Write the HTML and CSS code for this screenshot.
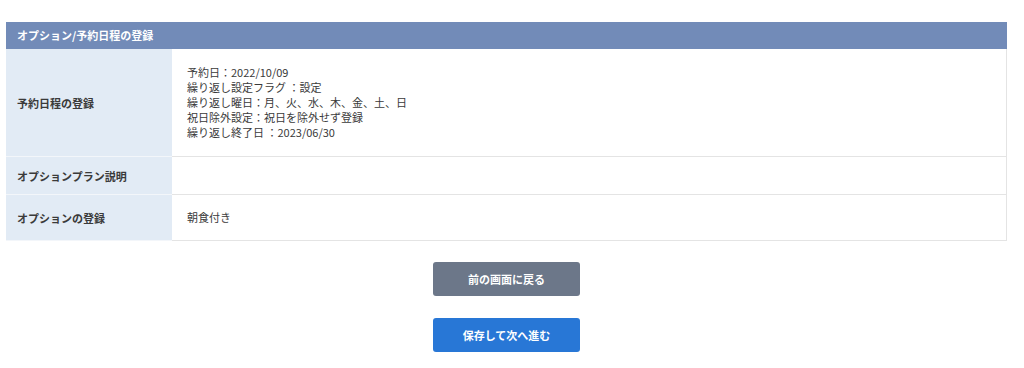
FILE: index.html
```html
<!DOCTYPE html>
<html lang="ja">
<head>
  <meta charset="UTF-8">
  <meta name="viewport" content="width=device-width, initial-scale=1.0">
  <title>オプション/予約日程の登録</title>
  <link rel="stylesheet" href="styles.css">
</head>
<body>
  <div class="panel">
    <div class="panel-title">オプション/予約日程の登録</div>
    <table class="form-table">
      <tr class="row-schedule">
        <th>予約日程の登録</th>
        <td>
          予約日：2022/10/09<br>
          繰り返し設定フラグ ：設定<br>
          繰り返し曜日：月、火、水、木、金、土、日<br>
          祝日除外設定：祝日を除外せず登録<br>
          繰り返し終了日 ：2023/06/30
        </td>
      </tr>
      <tr class="row-plan">
        <th>オプションプラン説明</th>
        <td></td>
      </tr>
      <tr class="row-option">
        <th>オプションの登録</th>
        <td>朝食付き</td>
      </tr>
    </table>
  </div>

  <div class="actions">
    <button class="btn btn-back">前の画面に戻る</button>
    <button class="btn btn-next">保存して次へ進む</button>
  </div>
</body>
</html>
```

FILE: styles.css
```css
body {
  margin: 0;
  font-family: "Noto Sans CJK JP", "Noto Sans", sans-serif;
  font-size: 11px;
  color: #3a3a3a;
  background: #fff;
}

.panel {
  margin: 22px 0 0 6px;
  width: 1001px;
}

.panel-title {
  height: 27px;
  line-height: 27px;
  padding-left: 11px;
  background-color: #728bb8;
  color: #fff;
  font-weight: bold;
}

.form-table {
  width: 100%;
  border-collapse: collapse;
}

.form-table th,
.form-table td {
  border-bottom: 1px solid #e4e4e4;
  padding: 0;
  vertical-align: middle;
  text-align: left;
}

.form-table th {
  width: 155px;
  padding-left: 11px;
  background-color: #e2ebf5;
  font-weight: bold;
  border-bottom-color: #f3f6fa;
}

.form-table td {
  padding-left: 15px;
  line-height: 15px;
  border-right: 1px solid #e4e4e4;
}

.row-schedule th,
.row-schedule td {
  height: 107px;
}

.row-plan th,
.row-plan td {
  height: 37px;
}

.row-option th,
.row-option td {
  height: 45px;
}

.actions {
  display: flex;
  flex-direction: column;
  align-items: center;
  gap: 22px;
  margin-top: 21px;
  padding-right: 11px;
}

.btn {
  width: 147px;
  height: 34px;
  border: none;
  border-radius: 3px;
  color: #fff;
  font-family: inherit;
  font-size: 11px;
  font-weight: bold;
  cursor: pointer;
}

.btn-back {
  background-color: #6c7789;
}

.btn-next {
  background-color: #2877d6;
}
```
